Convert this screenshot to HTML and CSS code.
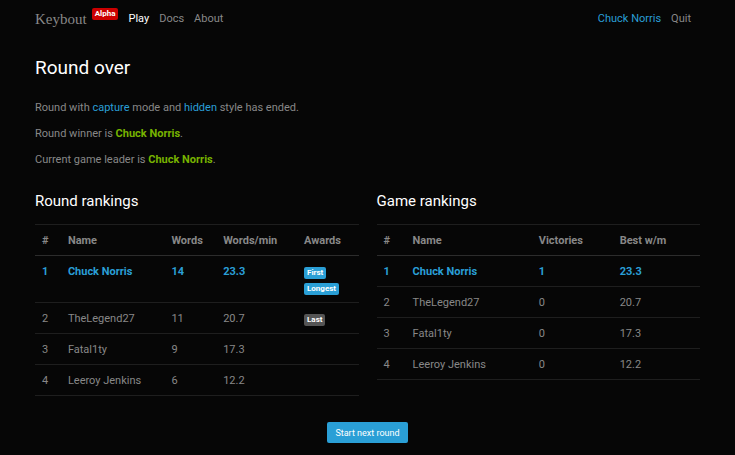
FILE: index.html
```html
<!DOCTYPE html>
<html lang="en">
<head>
<meta charset="utf-8">
<title>Keybout</title>
<link rel="stylesheet" href="styles.css">
</head>
<body>
<header class="navbar">
  <a class="brand" href="#">Keybout</a>
  <span class="badge badge-alpha">Alpha</span>
  <nav class="nav">
    <a class="active" href="#">Play</a>
    <a href="#">Docs</a>
    <a href="#">About</a>
  </nav>
  <div class="nav user-nav">
    <span class="info">Chuck Norris</span>
    <a href="#">Quit</a>
  </div>
</header>
<main class="content">
  <h1>Round over</h1>
  <p>Round with <span class="info">capture</span> mode and <span class="info">hidden</span> style has ended.</p>
  <p>Round winner is <strong>Chuck Norris</strong>.</p>
  <p>Current game leader is <strong>Chuck Norris</strong>.</p>
  <div class="rankings">
    <section>
      <h2>Round rankings</h2>
      <table class="round-table">
        <colgroup><col class="rank"><col class="name"><col class="words"><col class="speed"><col></colgroup>
        <thead>
          <tr><th>#</th><th>Name</th><th>Words</th><th>Words/min</th><th>Awards</th></tr>
        </thead>
        <tbody>
          <tr class="me"><td>1</td><td>Chuck Norris</td><td>14</td><td>23.3</td><td><div class="awards"><span class="badge badge-info">First</span><span class="badge badge-info">Longest</span></div></td></tr>
          <tr><td>2</td><td>TheLegend27</td><td>11</td><td>20.7</td><td><div class="awards"><span class="badge badge-muted">Last</span></div></td></tr>
          <tr><td>3</td><td>Fatal1ty</td><td>9</td><td>17.3</td><td></td></tr>
          <tr><td>4</td><td>Leeroy Jenkins</td><td>6</td><td>12.2</td><td></td></tr>
        </tbody>
      </table>
    </section>
    <section>
      <h2>Game rankings</h2>
      <table class="game-table">
        <colgroup><col class="rank"><col class="name"><col class="victories"><col></colgroup>
        <thead>
          <tr><th>#</th><th>Name</th><th>Victories</th><th>Best w/m</th></tr>
        </thead>
        <tbody>
          <tr class="me"><td>1</td><td>Chuck Norris</td><td>1</td><td>23.3</td></tr>
          <tr><td>2</td><td>TheLegend27</td><td>0</td><td>20.7</td></tr>
          <tr><td>3</td><td>Fatal1ty</td><td>0</td><td>17.3</td></tr>
          <tr><td>4</td><td>Leeroy Jenkins</td><td>0</td><td>12.2</td></tr>
        </tbody>
      </table>
    </section>
  </div>
  <div class="actions"><button type="button">Start next round</button></div>
</main>
</body>
</html>
```
FILE: styles.css
```css
* { box-sizing: border-box; }

body {
  margin: 0;
  background: #060606;
  color: #888;
  font: 11px/16px Roboto, sans-serif;
}

a { color: inherit; text-decoration: none; }

.navbar {
  display: flex;
  align-items: center;
  padding: 8px 44px 8px 35px;
  line-height: 22px;
}

.brand { font: 15px/22px "Liberation Serif", serif; }

.nav { display: flex; gap: 10px; margin-left: 10px; }
.nav .active { color: #fff; }
.user-nav { margin-left: auto; }

.info { color: #2a9fd6; }

.badge {
  padding: 2px 3px;
  border-radius: 2px;
  color: #fff;
  font-size: 8px;
  font-weight: 700;
  line-height: 8px;
}
.badge-alpha { align-self: flex-start; margin-left: 5px; background: #c00; }
.badge-info { background: #2a9fd6; }
.badge-muted { background: #555; }

.content { padding: 18px 35px 12px; }

h1, h2 { margin: 0; color: #fff; font-weight: 400; }
h1 { margin-bottom: 20px; font-size: 19px; line-height: 24px; }
h2 { margin-bottom: 14px; font-size: 15px; line-height: 18px; }

p { margin: 0 0 10px; }
strong { color: #77b300; }

.rankings {
  display: grid;
  grid-template-columns: 1fr 1fr;
  align-items: start;
  gap: 18px;
  padding-top: 14px;
}

table { width: 100%; border-collapse: collapse; table-layout: fixed; }
th, td {
  padding: 8px 0 6px 7px;
  border-bottom: 1px solid #1e1e1e;
  text-align: left;
  vertical-align: top;
}
th { border-top: 1px solid #1e1e1e; border-bottom-color: #2c2c2c; }
.me { color: #2a9fd6; font-weight: 700; }

.round-table .rank { width: 8%; }
.round-table .name { width: 32%; }
.round-table .words { width: 16%; }
.round-table .speed { width: 25%; }
.game-table .rank { width: 9%; }
.game-table .name { width: 39%; }
.game-table .victories { width: 25%; }

.awards {
  display: flex;
  flex-direction: column;
  align-items: flex-start;
  gap: 4px;
  padding: 3px 0 1px;
}

.actions { display: flex; justify-content: center; padding-top: 26px; }
button {
  padding: 3px 8px 2px;
  border: 0;
  border-radius: 2px;
  background: #2a9fd6;
  color: #fff;
  font: 9px/16px Roboto, sans-serif;
}
```
